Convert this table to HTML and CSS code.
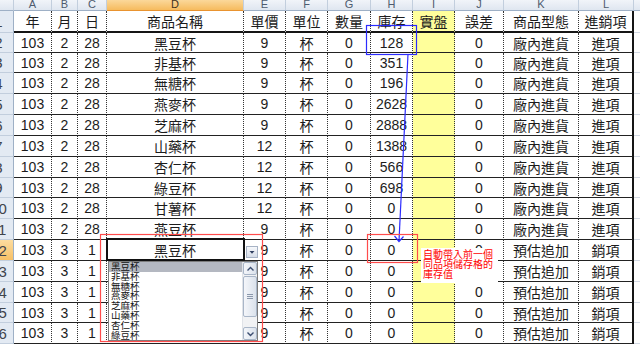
FILE: index.html
```html
<!DOCTYPE html>
<html lang="zh-Hant">
<head>
<meta charset="utf-8">
<title>庫存表</title>
<link rel="stylesheet" href="styles.css">
</head>
<body>
<div class="sheet">
  <div class="row colhead">
    <div class="ch"></div>
    <div class="ch"><span>A</span></div>
    <div class="ch"><span>B</span></div>
    <div class="ch"><span>C</span></div>
    <div class="ch sel"><span>D</span></div>
    <div class="ch"><span>E</span></div>
    <div class="ch"><span>F</span></div>
    <div class="ch"><span>G</span></div>
    <div class="ch"><span>H</span></div>
    <div class="ch"><span>I</span></div>
    <div class="ch"><span>J</span></div>
    <div class="ch"><span>K</span></div>
    <div class="ch"><span>L</span></div>
    <div class="ch last"></div>
  </div>

  <div class="row h22 hdr">
    <div class="rh"><span>1</span></div>
    <div class="c">年</div><div class="c">月</div><div class="c">日</div><div class="c">商品名稱</div>
    <div class="c">單價</div><div class="c">單位</div><div class="c">數量</div><div class="c">庫存</div>
    <div class="c yl">實盤</div><div class="c">誤差</div><div class="c">商品型態</div><div class="c lc">進銷項</div><div class="m"></div>
  </div>

  <div class="row h20">
    <div class="rh"><span>2</span></div>
    <div class="c">103</div><div class="c">2</div><div class="c">28</div><div class="c">黑豆杯</div>
    <div class="c">9</div><div class="c">杯</div><div class="c">0</div><div class="c">128</div>
    <div class="c yl"></div><div class="c">0</div><div class="c">廠內進貨</div><div class="c lc">進項</div><div class="m"></div>
  </div>
  <div class="row h20">
    <div class="rh"><span>3</span></div>
    <div class="c">103</div><div class="c">2</div><div class="c">28</div><div class="c">非基杯</div>
    <div class="c">9</div><div class="c">杯</div><div class="c">0</div><div class="c">351</div>
    <div class="c yl"></div><div class="c">0</div><div class="c">廠內進貨</div><div class="c lc">進項</div><div class="m"></div>
  </div>
  <div class="row h21">
    <div class="rh"><span>4</span></div>
    <div class="c">103</div><div class="c">2</div><div class="c">28</div><div class="c">無糖杯</div>
    <div class="c">9</div><div class="c">杯</div><div class="c">0</div><div class="c">196</div>
    <div class="c yl"></div><div class="c">0</div><div class="c">廠內進貨</div><div class="c lc">進項</div><div class="m"></div>
  </div>
  <div class="row h21">
    <div class="rh"><span>5</span></div>
    <div class="c">103</div><div class="c">2</div><div class="c">28</div><div class="c">燕麥杯</div>
    <div class="c">9</div><div class="c">杯</div><div class="c">0</div><div class="c">2628</div>
    <div class="c yl"></div><div class="c">0</div><div class="c">廠內進貨</div><div class="c lc">進項</div><div class="m"></div>
  </div>
  <div class="row h21">
    <div class="rh"><span>6</span></div>
    <div class="c">103</div><div class="c">2</div><div class="c">28</div><div class="c">芝麻杯</div>
    <div class="c">9</div><div class="c">杯</div><div class="c">0</div><div class="c">2888</div>
    <div class="c yl"></div><div class="c">0</div><div class="c">廠內進貨</div><div class="c lc">進項</div><div class="m"></div>
  </div>
  <div class="row h21">
    <div class="rh"><span>7</span></div>
    <div class="c">103</div><div class="c">2</div><div class="c">28</div><div class="c">山藥杯</div>
    <div class="c">12</div><div class="c">杯</div><div class="c">0</div><div class="c">1388</div>
    <div class="c yl"></div><div class="c">0</div><div class="c">廠內進貨</div><div class="c lc">進項</div><div class="m"></div>
  </div>
  <div class="row h21">
    <div class="rh"><span>8</span></div>
    <div class="c">103</div><div class="c">2</div><div class="c">28</div><div class="c">杏仁杯</div>
    <div class="c">12</div><div class="c">杯</div><div class="c">0</div><div class="c">566</div>
    <div class="c yl"></div><div class="c">0</div><div class="c">廠內進貨</div><div class="c lc">進項</div><div class="m"></div>
  </div>
  <div class="row h20">
    <div class="rh"><span>9</span></div>
    <div class="c">103</div><div class="c">2</div><div class="c">28</div><div class="c">綠豆杯</div>
    <div class="c">12</div><div class="c">杯</div><div class="c">0</div><div class="c">698</div>
    <div class="c yl"></div><div class="c">0</div><div class="c">廠內進貨</div><div class="c lc">進項</div><div class="m"></div>
  </div>
  <div class="row h21">
    <div class="rh"><span>10</span></div>
    <div class="c">103</div><div class="c">2</div><div class="c">28</div><div class="c">甘薯杯</div>
    <div class="c">12</div><div class="c">杯</div><div class="c">0</div><div class="c">0</div>
    <div class="c yl"></div><div class="c">0</div><div class="c">廠內進貨</div><div class="c lc">進項</div><div class="m"></div>
  </div>
  <div class="row h21">
    <div class="rh"><span>11</span></div>
    <div class="c">103</div><div class="c">2</div><div class="c">28</div><div class="c">燕豆杯</div>
    <div class="c">9</div><div class="c">杯</div><div class="c">0</div><div class="c">0</div>
    <div class="c yl"></div><div class="c">0</div><div class="c">廠內進貨</div><div class="c lc">進項</div><div class="m"></div>
  </div>
  <div class="row h21">
    <div class="rh sel"><span>12</span></div>
    <div class="c">103</div><div class="c">3</div><div class="c">1</div><div class="c">黑豆杯</div>
    <div class="c">9</div><div class="c">杯</div><div class="c">0</div><div class="c">0</div>
    <div class="c yl"></div><div class="c">0</div><div class="c">預估追加</div><div class="c lc">銷項</div><div class="m"></div>
  </div>
  <div class="row h21">
    <div class="rh"><span>13</span></div>
    <div class="c">103</div><div class="c">3</div><div class="c">1</div><div class="c"></div>
    <div class="c">9</div><div class="c">杯</div><div class="c">0</div><div class="c">0</div>
    <div class="c yl"></div><div class="c">0</div><div class="c">預估追加</div><div class="c lc">銷項</div><div class="m"></div>
  </div>
  <div class="row h21">
    <div class="rh"><span>14</span></div>
    <div class="c">103</div><div class="c">3</div><div class="c">1</div><div class="c"></div>
    <div class="c">9</div><div class="c">杯</div><div class="c">0</div><div class="c">0</div>
    <div class="c yl"></div><div class="c">0</div><div class="c">預估追加</div><div class="c lc">銷項</div><div class="m"></div>
  </div>
  <div class="row h20">
    <div class="rh"><span>15</span></div>
    <div class="c">103</div><div class="c">3</div><div class="c">1</div><div class="c"></div>
    <div class="c">9</div><div class="c">杯</div><div class="c">0</div><div class="c">0</div>
    <div class="c yl"></div><div class="c">0</div><div class="c">預估追加</div><div class="c lc">銷項</div><div class="m"></div>
  </div>
  <div class="row h21">
    <div class="rh"><span>16</span></div>
    <div class="c">103</div><div class="c">3</div><div class="c">1</div><div class="c"></div>
    <div class="c">9</div><div class="c">杯</div><div class="c">0</div><div class="c">0</div>
    <div class="c yl"></div><div class="c">0</div><div class="c">預估追加</div><div class="c lc">銷項</div><div class="m"></div>
  </div>
</div>

<div class="active"></div>
<div class="ddbtn">
  <svg width="10" height="10" viewBox="0 0 10 10"><polygon points="2.5,4 7.5,4 5,6.8" fill="#2f3f60"/></svg>
</div>

<div class="list">
  <div class="items">
    <div class="it hi">黑豆杯</div>
    <div class="it">非基杯</div>
    <div class="it">無糖杯</div>
    <div class="it">燕麥杯</div>
    <div class="it">芝麻杯</div>
    <div class="it">山藥杯</div>
    <div class="it">杏仁杯</div>
    <div class="it">綠豆杯</div>
  </div>
  <div class="sb">
    <div class="sbbtn"><svg width="11" height="10" viewBox="0 0 11 10"><polyline points="2.5,6.5 5.5,3.5 8.5,6.5" fill="none" stroke="#3b4d70" stroke-width="1.4"/></svg></div>
    <div class="thumb"><svg width="6" height="5" viewBox="0 0 6 5"><path d="M0 0.5H6M0 2.5H6M0 4.5H6" stroke="#8a97ab" stroke-width="1"/></svg></div>
    <div class="track"></div>
    <div class="sbbtn"><svg width="11" height="10" viewBox="0 0 11 10"><polyline points="2.5,3.5 5.5,6.5 8.5,3.5" fill="none" stroke="#3b4d70" stroke-width="1.4"/></svg></div>
  </div>
</div>

<div class="note">自動帶入前一個<br>同品項儲存格的<br>庫存值</div>

<svg class="marks" width="640" height="345" viewBox="0 0 640 345">
  <rect x="366.5" y="25.5" width="50" height="29" fill="none" stroke="#2c2cff" stroke-width="1.2"/>
  <line x1="408" y1="54" x2="399" y2="241" stroke="#2c2cff" stroke-width="1.2"/>
  <polyline points="394.5,236 399,241.5 403.5,236.5" fill="none" stroke="#2c2cff" stroke-width="1.2"/>
  <rect x="100.5" y="234.5" width="162" height="107" fill="none" stroke="#ff4c4c" stroke-width="1.2"/>
  <rect x="367.5" y="234.5" width="50" height="28" fill="none" stroke="#ff4c4c" stroke-width="1.2"/>
</svg>
</body>
</html>
```

FILE: styles.css
```css
html, body {
  margin: 0;
  padding: 0;
}
body {
  width: 640px;
  height: 345px;
  overflow: hidden;
  position: relative;
  background: #fff;
  font-family: "Liberation Sans", "Noto Sans CJK TC", sans-serif;
  color: #1c1c1c;
}
.sheet {
  display: flex;
  flex-direction: column;
}
.row {
  display: grid;
  grid-template-columns: 14px 38px 26px 29px 137px 42px 42px 43px 42px 42px 49px 75px 55px 1fr;
}
.h20 { height: 20px; }
.h21 { height: 21px; }
.h22 { height: 22px; }

.colhead { height: 11px; }
.ch {
  box-sizing: border-box;
  height: 11px;
  border-right: 1px solid #c2cedd;
  border-bottom: 1px solid #9eb0c6;
  background: linear-gradient(#f1f4f9, #dfe6f0);
  display: flex;
  justify-content: center;
  align-items: flex-start;
  overflow: hidden;
  font-size: 11px;
  color: #4e5b6e;
}
.ch span {
  line-height: 11px;
  margin-top: -1px;
}
.ch.sel {
  background: linear-gradient(#fbd89a, #f6bb5e);
  border-bottom-color: #e9932f;
  color: #3d3320;
}
.ch.last { border-right: none; }

.rh {
  box-sizing: border-box;
  border-right: 1px solid #9eb0c6;
  border-bottom: 1px solid #c2cedd;
  background: #e3eaf3;
  display: flex;
  align-items: center;
  overflow: hidden;
}
.rh span {
  flex: none;
  width: 31px;
  margin-left: -17px;
  text-align: center;
  font-size: 15px;
  color: #3f444c;
}
.rh.sel {
  background: linear-gradient(#fcdc9f, #f7c066);
}

.c {
  box-sizing: border-box;
  border-right: 1px dotted #333;
  border-bottom: 1px solid #222;
  display: flex;
  align-items: center;
  justify-content: center;
  white-space: nowrap;
  overflow: hidden;
  font-size: 14px;
}
.hdr .c { border-bottom: 2px solid #151515; }
.hdr .rh { border-bottom-color: #c2cedd; }
.yl { background: #ffff9b; }
.lc { border-right: 2px solid #151515; }
.m {
  box-sizing: border-box;
  border-bottom: 1px solid #d4dae4;
}

/* overlays */
.active {
  position: absolute;
  left: 106px;
  top: 238px;
  width: 139px;
  height: 23px;
  box-sizing: border-box;
  border: 2px solid #111;
}
.ddbtn {
  position: absolute;
  left: 246px;
  top: 246px;
  width: 12px;
  height: 12px;
  box-sizing: border-box;
  border: 1px solid #a7b3c5;
  background: linear-gradient(#f7f9fc, #d5dce8);
  display: flex;
  align-items: center;
  justify-content: center;
}
.list {
  position: absolute;
  left: 108px;
  top: 261px;
  width: 150px;
  height: 80px;
  box-sizing: border-box;
  border: 1px solid #7d7d7d;
  background: #fff;
  display: flex;
}
.items {
  flex: 1;
  display: flex;
  flex-direction: column;
}
.it {
  height: 9.8px;
  line-height: 9.8px;
  font-size: 9.5px;
  padding-left: 2px;
  font-family: "Noto Sans CJK TC", sans-serif;
  color: #111;
  white-space: nowrap;
}
.it.hi { background: #b4b8c1; }
.sb {
  width: 14px;
  display: flex;
  flex-direction: column;
  background: #f1f2f4;
  border-left: 1px solid #e0e3e8;
}
.sbbtn, .thumb {
  box-sizing: border-box;
  border: 1px solid #a9b6c8;
  border-radius: 2px;
  background: linear-gradient(90deg, #f4f6fa, #dbe2ec);
  display: flex;
  align-items: center;
  justify-content: center;
}
.sbbtn { height: 13px; }
.thumb { height: 41px; margin-top: 1px; }
.track { flex: 1; }

.note {
  position: absolute;
  left: 421px;
  top: 248px;
  width: 77px;
  height: 35px;
  box-sizing: border-box;
  padding: 1px 0 0 2px;
  background: #fff;
  color: #ff0000;
  font-family: "Noto Sans CJK TC", sans-serif;
  font-size: 10px;
  line-height: 10px;
  white-space: nowrap;
}
.marks {
  position: absolute;
  left: 0;
  top: 0;
  pointer-events: none;
}
```
